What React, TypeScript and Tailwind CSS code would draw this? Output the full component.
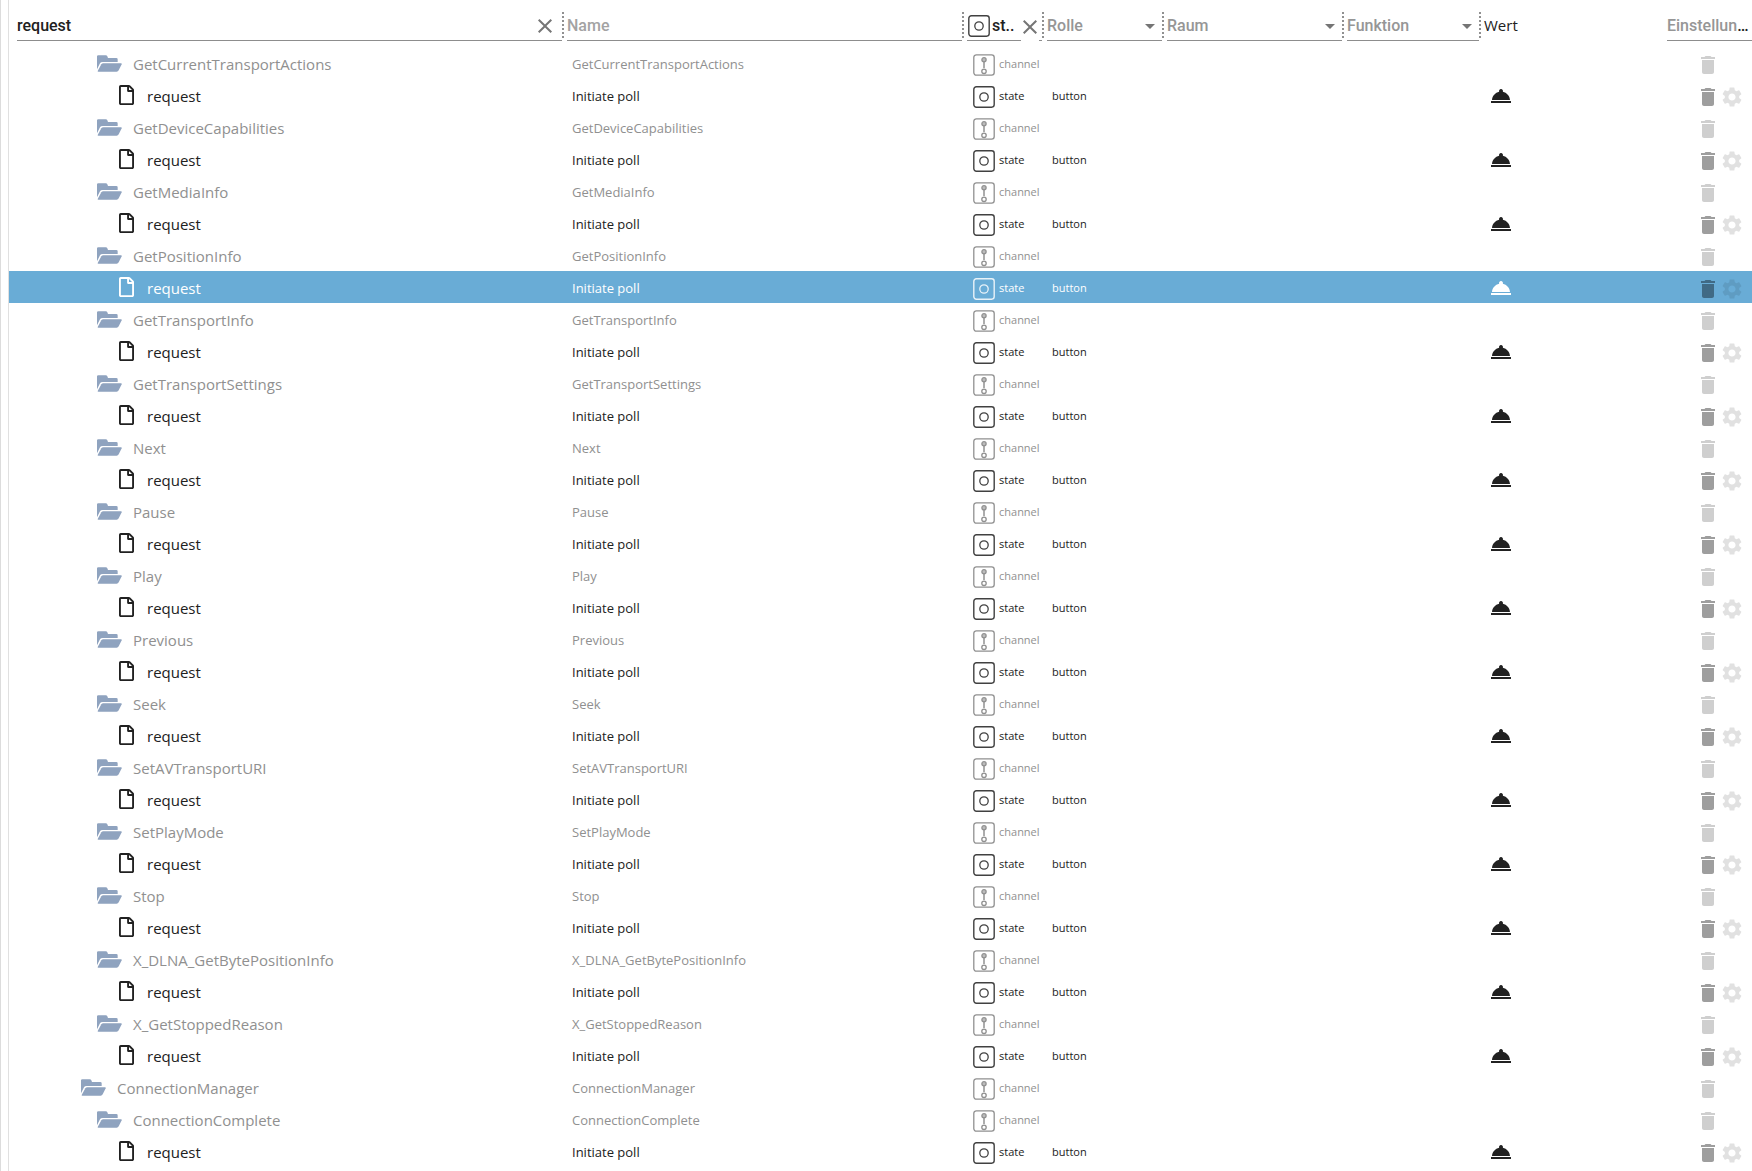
import { useState } from 'react';
import { FaRegFile } from 'react-icons/fa';
import { MdArrowDropDown, MdClose, MdDelete, MdRoomService, MdSettings } from 'react-icons/md';
import clsx from 'clsx';

type Item = {
    id: string;
    parent: string;
    level: number;
    type: 'channel' | 'state';
};

const commands = [
    'GetCurrentTransportActions',
    'GetDeviceCapabilities',
    'GetMediaInfo',
    'GetPositionInfo',
    'GetTransportInfo',
    'GetTransportSettings',
    'Next',
    'Pause',
    'Play',
    'Previous',
    'Seek',
    'SetAVTransportURI',
    'SetPlayMode',
    'Stop',
    'X_DLNA_GetBytePositionInfo',
    'X_GetStoppedReason',
];

const withRequest = (name: string): Item[] => [
    { id: name, parent: 'AVTransport', level: 1, type: 'channel' },
    { id: 'request', parent: name, level: 2, type: 'state' },
];

const items: Item[] = [
    ...commands.flatMap(withRequest),
    { id: 'ConnectionManager', parent: '', level: 0, type: 'channel' },
    ...withRequest('ConnectionComplete'),
];

const indent = ['pl-[72px]', 'pl-[88px]', 'pl-[110px]'];

function IconFolderOpen() {
    return (
        <svg viewBox="0 0 75 51" className="h-[17px] w-[25px] shrink-0 fill-[#8fa3bf]" aria-hidden="true">
            <path d="M0 4Q0 1 4 1H26Q30 1 31 4L33 9H58Q62 9 62 13V21H17Q11 21 9 25L0 43Z" />
            <path d="M19 25H72Q75 25 74 28L65 46Q63 50 59 50H4Q1 50 2 48L13 28Q15 25 19 25Z" />
        </svg>
    );
}

function IconState() {
    return (
        <svg viewBox="0 0 22 22" className="size-[22px] shrink-0 opacity-85" fill="none" stroke="currentColor" aria-hidden="true">
            <rect x="0.8" y="0.8" width="20.4" height="20.4" rx="2.6" strokeWidth="1.4" />
            <circle cx="11" cy="11" r="4.2" strokeWidth="1.3" />
        </svg>
    );
}

function IconChannel() {
    return (
        <svg viewBox="0 0 22 22" className="size-[22px] shrink-0" fill="none" stroke="currentColor" aria-hidden="true">
            <rect x="0.8" y="0.8" width="20.4" height="20.4" rx="2.6" strokeWidth="1.3" />
            <circle cx="11" cy="5.8" r="2.1" strokeWidth="1.3" fill="currentColor" fillOpacity="0.6" />
            <path d="M11 7.8v6.2" strokeWidth="1.5" />
            <circle cx="11" cy="17.3" r="2.2" strokeWidth="1.3" />
        </svg>
    );
}

const field = 'flex h-[29px] min-w-0 flex-1 items-center border-b border-[#8d8d8d]';
const control = 'min-w-0 flex-1 appearance-none bg-transparent outline-none';
const headCell = 'p-0 pb-[6px] pl-[3px] align-bottom font-medium';

function Divider() {
    return <div className="h-[26px] w-0 border-r-2 border-dotted border-[#909090]" />;
}

function SelectFilter({ label }: { label: string }) {
    return (
        <th className={headCell}>
            <div className="flex">
                <div className={field}>
                    <select aria-label={label} className={clsx(control, 'text-[#969696]')}>
                        <option>{label}</option>
                    </select>
                    <MdArrowDropDown className="size-6 shrink-0 text-[#757575]" />
                </div>
                <Divider />
            </div>
        </th>
    );
}

export default function ObjectBrowser() {
    const [filter, setFilter] = useState('request');
    const [name, setName] = useState('');
    const [selected, setSelected] = useState(7);

    return (
        <div className="min-h-screen border-l border-[#dcdcdc] bg-white pl-[7px]">
            <div className="min-h-screen border-l border-[#e0e0e0]">
                <table className="w-full table-fixed border-collapse font-['Open_Sans',sans-serif] text-[#212121]">
                    <colgroup>
                        <col />
                        <col className="w-[400px]" />
                        <col className="w-20" />
                        <col className="w-[120px]" />
                        <col className="w-[180px]" />
                        <col className="w-[137px]" />
                        <col className="w-[183px]" />
                        <col className="w-[88px]" />
                    </colgroup>
                    <thead>
                        <tr className="h-[47px] text-left font-['Roboto',sans-serif] text-base">
                            <th className="p-0 pb-[6px] pl-2 align-bottom font-medium">
                                <div className="flex">
                                    <div className={field}>
                                        <input
                                            aria-label="ID"
                                            value={filter}
                                            onChange={(e) => setFilter(e.target.value)}
                                            className={control}
                                        />
                                        <button type="button" aria-label="Clear ID" onClick={() => setFilter('')} className="mr-[5px]">
                                            <MdClose className="size-6 text-[#757575]" />
                                        </button>
                                    </div>
                                    <Divider />
                                </div>
                            </th>
                            <th className={headCell}>
                                <div className="flex">
                                    <div className={field}>
                                        <input
                                            aria-label="Name"
                                            placeholder="Name"
                                            value={name}
                                            onChange={(e) => setName(e.target.value)}
                                            className={clsx(control, 'placeholder-[#a3a3a3]')}
                                        />
                                    </div>
                                    <Divider />
                                </div>
                            </th>
                            <th className={headCell}>
                                <div className="flex">
                                    <div className={clsx(field, 'pl-px')}>
                                        <IconState />
                                        <select aria-label="Typ" className={clsx(control, 'ml-[2px]')}>
                                            <option value="state">st..</option>
                                        </select>
                                        <button
                                            type="button"
                                            aria-label="Clear type"
                                            className="mr-[3px] -mb-px flex h-[29px] w-[18px] items-center justify-center bg-white"
                                        >
                                            <MdClose className="size-6 shrink-0 text-[#757575]" />
                                        </button>
                                    </div>
                                    <Divider />
                                </div>
                            </th>
                            <SelectFilter label="Rolle" />
                            <SelectFilter label="Raum" />
                            <SelectFilter label="Funktion" />
                            <th className="p-0 pb-[6px] pl-[3px] align-bottom font-['Open_Sans',sans-serif] text-[15px] font-normal">
                                <div className="h-[29px] leading-[26px]">Wert</div>
                            </th>
                            <th className={headCell}>
                                <button type="button" className="block h-[29px] w-full truncate border-b border-[#8d8d8d] text-left">
                                    <span className="text-[#969696]">Einstellungen</span>
                                </button>
                            </th>
                        </tr>
                    </thead>
                    <tbody>
                        {items.map((item, i) => {
                            const isState = item.type === 'state';
                            const isSelected = selected === i;
                            return (
                                <tr
                                    key={`${item.parent}.${item.id}`}
                                    onClick={() => setSelected(i)}
                                    className={clsx(
                                        'h-8',
                                        isSelected ? 'bg-[#69acd6] text-white' : !isState && 'text-[#909090]',
                                    )}
                                >
                                    <td className={clsx('p-0', indent[item.level])}>
                                        <div className="flex items-center">
                                            {isState ? <FaRegFile className="h-5 w-[15px] shrink-0" /> : <IconFolderOpen />}
                                            <span className={clsx('pt-[2px] text-[15px] leading-6', isState ? 'ml-[13px]' : 'ml-[11px]')}>
                                                {item.id}
                                            </span>
                                        </div>
                                    </td>
                                    <td className="p-0 pt-[3px] pl-2 text-[13px]">{isState ? 'Initiate poll' : item.id}</td>
                                    <td className="p-0 pt-1 pl-[9px]">
                                        <div className="flex items-center gap-1 text-[11px] leading-5">
                                            {isState ? <IconState /> : <IconChannel />}
                                            <span className="pb-[2px]">{item.type}</span>
                                        </div>
                                    </td>
                                    <td className="p-0 pt-[2px] pl-2 text-[11px]">{isState && 'button'}</td>
                                    <td className="p-0" />
                                    <td className="p-0" />
                                    <td className="p-0 pt-[2px] pl-2">
                                        {isState && (
                                            <button type="button" aria-label="Initiate poll" className="block">
                                                <MdRoomService className="size-6" />
                                            </button>
                                        )}
                                    </td>
                                    <td className="p-0 pt-1 pl-8">
                                        <div className="flex">
                                            <button
                                                type="button"
                                                aria-label="Delete"
                                                className={clsx(
                                                    isSelected ? 'text-[#406a85]' : isState ? 'text-[#9e9e9e]' : 'text-[#cfcfcf]',
                                                )}
                                            >
                                                <MdDelete className="size-6" />
                                            </button>
                                            {isState && (
                                                <button
                                                    type="button"
                                                    aria-label="Settings"
                                                    className={isSelected ? 'text-[#5f9cc2]' : 'text-[#e1e1e1]'}
                                                >
                                                    <MdSettings className="size-6" />
                                                </button>
                                            )}
                                        </div>
                                    </td>
                                </tr>
                            );
                        })}
                    </tbody>
                </table>
            </div>
        </div>
    );
}
